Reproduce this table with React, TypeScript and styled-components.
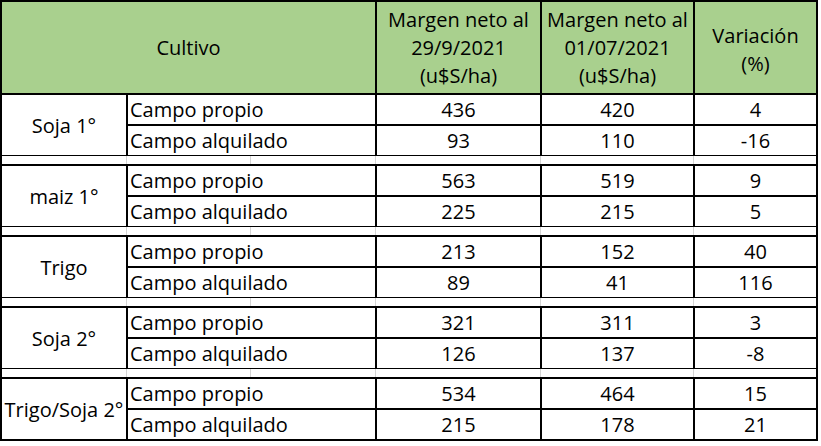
import React from "react";
import styled, { createGlobalStyle } from "styled-components";

const Global = createGlobalStyle`
  html, body { margin: 0; padding: 0; background: #ffffff; }
  body { font-family: "Open Sans", Lato, sans-serif; }
`;

const FONT = `"Open Sans", Lato, "Liberation Sans", sans-serif`;
const BODY_COLS = "126px 249px 165px 153px 121px";
const SEP_COLS = "125px 124px 125px 165px 153px 122px";

const Frame = styled.div`
  width: 818px;
  box-sizing: border-box;
  border: 2px solid #000;
  display: flex;
  flex-direction: column;
  font-family: ${FONT};
  font-size: 20px;
  color: #000;
  background: #fff;
`;

const Header = styled.div`
  display: grid;
  grid-template-columns: 375px 165px 153px 121px;
  height: 93px;
  box-sizing: border-box;
  border-bottom: 2px solid #000;
  background: #a9d08e;
`;

const HeadCell = styled.div<{ $last?: boolean; $shift?: number }>`
  display: flex;
  flex-direction: column;
  align-items: center;
  justify-content: center;
  box-sizing: border-box;
  border-right: ${(p) => (p.$last ? "none" : "2px solid #000")};
  padding-top: ${(p) => p.$shift ?? 0}px;
  line-height: 28px;
  text-align: center;
  white-space: nowrap;
`;

const Group = styled.div`
  display: grid;
  grid-template-columns: ${BODY_COLS};
  grid-template-rows: 31px 29px;
`;

const NameCell = styled.div`
  grid-row: 1 / span 2;
  box-sizing: border-box;
  border-right: 2px solid #000;
  display: flex;
  align-items: center;
  white-space: nowrap;
`;

const NameText = styled.span`
  display: block;
  width: 100%;
  text-align: center;
`;

const Cell = styled.div<{ $top?: boolean; $last?: boolean; $left?: boolean }>`
  box-sizing: border-box;
  border-bottom: ${(p) => (p.$top ? "2px solid #000" : "none")};
  border-right: ${(p) => (p.$last ? "none" : "2px solid #000")};
  display: flex;
  align-items: center;
  justify-content: ${(p) => (p.$left ? "flex-start" : "center")};
  padding-left: ${(p) => (p.$left ? "2px" : "0")};
  white-space: nowrap;
`;

const Separator = styled.div`
  display: grid;
  grid-template-columns: ${SEP_COLS};
  height: 11px;
  box-sizing: border-box;
  border-top: 1px solid #000;
  border-bottom: 2px solid #000;
`;

const GridLine = styled.div<{ $last?: boolean }>`
  box-sizing: border-box;
  border-right: ${(p) => (p.$last ? "none" : "1px solid #d4d4d4")};
`;

type Row = { label: string; a: string; b: string; v: string };
type Crop = { name: string; rows: [Row, Row] };

const data: Crop[] = [
  {
    name: "Soja 1°",
    rows: [
      { label: "Campo propio", a: "436", b: "420", v: "4" },
      { label: "Campo alquilado", a: "93", b: "110", v: "-16" },
    ],
  },
  {
    name: "maiz 1°",
    rows: [
      { label: "Campo propio", a: "563", b: "519", v: "9" },
      { label: "Campo alquilado", a: "225", b: "215", v: "5" },
    ],
  },
  {
    name: "Trigo",
    rows: [
      { label: "Campo propio", a: "213", b: "152", v: "40" },
      { label: "Campo alquilado", a: "89", b: "41", v: "116" },
    ],
  },
  {
    name: "Soja 2°",
    rows: [
      { label: "Campo propio", a: "321", b: "311", v: "3" },
      { label: "Campo alquilado", a: "126", b: "137", v: "-8" },
    ],
  },
  {
    name: "Trigo/Soja 2°",
    rows: [
      { label: "Campo propio", a: "534", b: "464", v: "15" },
      { label: "Campo alquilado", a: "215", b: "178", v: "21" },
    ],
  },
];

export default function App() {
  return (
    <>
      <Global />
      <Frame>
        <Header>
          <HeadCell>Cultivo</HeadCell>
          <HeadCell>
            <span>Margen neto al</span>
            <span>29/9/2021</span>
            <span>(u$S/ha)</span>
          </HeadCell>
          <HeadCell>
            <span>Margen neto al</span>
            <span>01/07/2021</span>
            <span>(u$S/ha)</span>
          </HeadCell>
          <HeadCell $last $shift={4}>
            <span>Variación</span>
            <span>(%)</span>
          </HeadCell>
        </Header>
        {data.map((crop, gi) => (
          <React.Fragment key={crop.name}>
            {gi > 0 && (
              <Separator>
                <GridLine />
                <GridLine />
                <GridLine />
                <GridLine />
                <GridLine />
                <GridLine $last />
              </Separator>
            )}
            <Group>
              <NameCell>
                <NameText>{crop.name}</NameText>
              </NameCell>
              {crop.rows.map((r, ri) => (
                <React.Fragment key={r.label}>
                  <Cell $top={ri === 0} $left>
                    {r.label}
                  </Cell>
                  <Cell $top={ri === 0}>{r.a}</Cell>
                  <Cell $top={ri === 0}>{r.b}</Cell>
                  <Cell $top={ri === 0} $last>
                    {r.v}
                  </Cell>
                </React.Fragment>
              ))}
            </Group>
          </React.Fragment>
        ))}
      </Frame>
    </>
  );
}
